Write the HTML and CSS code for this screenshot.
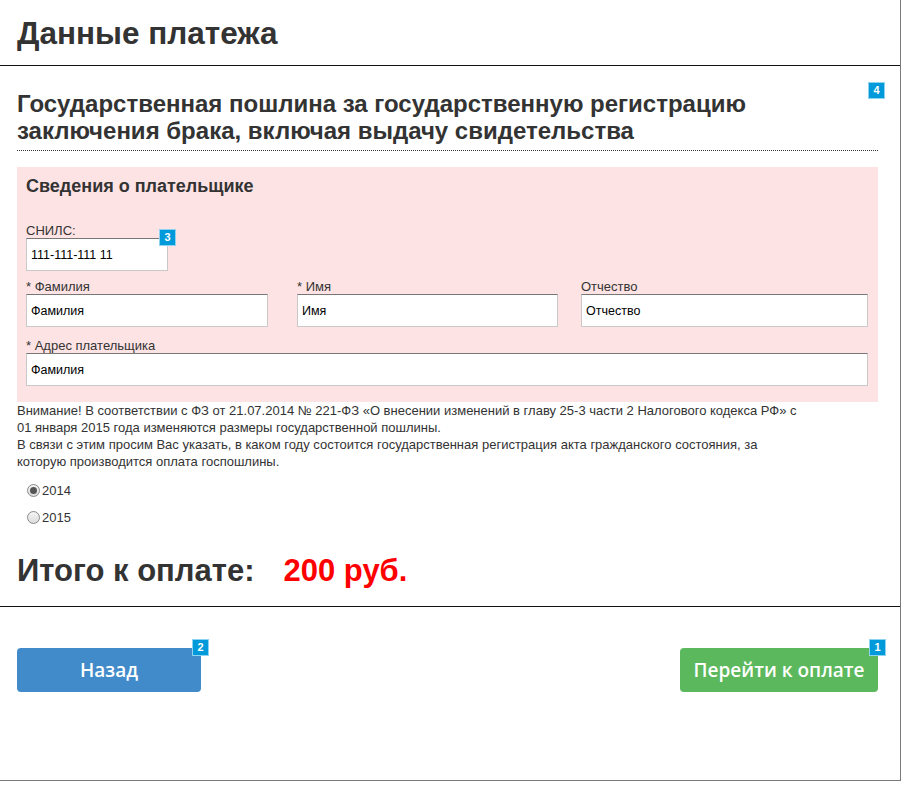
FILE: index.html
```html
<!DOCTYPE html>
<html lang="ru">
<head>
<meta charset="utf-8">
<title>Данные платежа</title>
<link rel="stylesheet" href="styles.css">
</head>
<body>
<div class="page">
  <header class="page-head">
    <h1 class="title">Данные платежа</h1>
  </header>
  <section class="content">
    <div class="service">
      <h2 class="service-title">Государственная пошлина за государственную регистрацию<br>заключения брака, включая выдачу свидетельства</h2>
      <span class="badge badge-service">4</span>
    </div>
    <div class="payer">
      <h3 class="payer-title">Сведения о плательщике</h3>
      <div class="field field-snils">
        <label class="label">СНИЛС:</label>
        <div class="input-wrap">
          <input class="input" type="text" value="111-111-111 11">
          <span class="badge badge-corner">3</span>
        </div>
      </div>
      <div class="name-row">
        <div class="field field-w1">
          <label class="label">* Фамилия</label>
          <input class="input" type="text" value="Фамилия">
        </div>
        <div class="field field-w2">
          <label class="label">* Имя</label>
          <input class="input" type="text" value="Имя">
        </div>
        <div class="field field-w3">
          <label class="label">Отчество</label>
          <input class="input" type="text" value="Отчество">
        </div>
      </div>
      <div class="field field-address">
        <label class="label">* Адрес плательщика</label>
        <input class="input" type="text" value="Фамилия">
      </div>
    </div>
    <p class="notice">Внимание! В соответствии с ФЗ от 21.07.2014 № 221-ФЗ «О внесении изменений в главу 25-3 части 2 Налогового кодекса РФ» с<br>01 января 2015 года изменяются размеры государственной пошлины.<br>В связи с этим просим Вас указать, в каком году состоится государственная регистрация акта гражданского состояния, за<br>которую производится оплата госпошлины.</p>
    <div class="years">
      <label class="year"><input class="radio" type="radio" name="year" checked>2014</label>
      <label class="year"><input class="radio" type="radio" name="year">2015</label>
    </div>
    <div class="total">
      <span class="total-label">Итого к оплате:</span>
      <span class="total-sum">200 руб.</span>
    </div>
  </section>
  <footer class="actions">
    <div class="btn-wrap">
      <button class="btn btn-back" type="button">Назад</button>
      <span class="badge badge-corner">2</span>
    </div>
    <div class="btn-wrap">
      <button class="btn btn-pay" type="button">Перейти к оплате</button>
      <span class="badge badge-corner">1</span>
    </div>
  </footer>
</div>
</body>
</html>
```

FILE: styles.css
```css
* { box-sizing: border-box; }

body {
  margin: 0;
  background: #fff;
  font-family: "Liberation Sans", Arial, sans-serif;
  color: #333;
}

.page {
  width: 901px;
  height: 781px;
  border-right: 1px solid #7a7a7a;
  border-bottom: 1px solid #7a7a7a;
  display: flex;
  flex-direction: column;
}

.page-head {
  height: 66px;
  border-bottom: 1px solid #111;
  padding: 0 17px;
}

.title {
  margin: 0;
  padding-top: 15px;
  font-size: 31.5px;
  line-height: 36px;
  font-weight: bold;
  color: #333;
}

.content {
  padding: 0 22px 0 17px;
  border-bottom: 1px solid #111;
}

.service {
  position: relative;
  padding-top: 24px;
  border-bottom: 1px dotted #333;
  padding-bottom: 6px;
}

.service-title {
  margin: 0;
  font-size: 24px;
  line-height: 27px;
  font-weight: bold;
  color: #333;
}

.badge {
  position: absolute;
  width: 17px;
  height: 17px;
  background: #0099d9;
  border: 1px solid #8fd3f2;
  color: #fff;
  font-family: "Liberation Sans", Arial, sans-serif;
  font-size: 11px;
  font-weight: bold;
  line-height: 15px;
  text-align: center;
}

.badge-service {
  top: 16px;
  right: -7px;
}

.badge-corner {
  top: -9px;
  right: -8px;
}

.payer {
  margin-top: 16px;
  background: #fde3e4;
  padding: 9px 10px 16px 9px;
}

.payer-title {
  margin: 0;
  font-size: 18px;
  line-height: 20px;
  font-weight: bold;
  color: #333;
}

.field {
  display: flex;
  flex-direction: column;
}

.field-snils {
  margin-top: 27px;
}

.input-wrap {
  position: relative;
  width: 142px;
}

.label {
  font-size: 13px;
  line-height: 15px;
  color: #333;
}

.input {
  display: block;
  width: 100%;
  height: 33px;
  margin: 0;
  padding: 0 4px;
  border: 1px solid #c9c9c9;
  border-top: 1px solid #777;
  background: #fff;
  font-family: "Liberation Sans", Arial, sans-serif;
  font-size: 12.5px;
  color: #000;
  outline: none;
}

.name-row {
  margin-top: 8px;
  display: grid;
  grid-template-columns: 271px 284px 287px;
}

.field-w1 { width: 242px; }
.field-w2 { width: 261px; }
.field-w3 { width: 287px; }

.field-address {
  margin-top: 11px;
}

.notice {
  margin: 0;
  font-size: 13px;
  line-height: 17px;
  color: #333;
  white-space: nowrap;
}

.years {
  margin-top: 7px;
  padding-left: 10px;
  display: flex;
  flex-direction: column;
}

.year {
  display: flex;
  align-items: center;
  height: 27px;
  font-size: 13px;
  color: #333;
}

.radio {
  appearance: none;
  -webkit-appearance: none;
  width: 13px;
  height: 13px;
  margin: 0 2px 0 0;
  border: 1px solid #8a8a8a;
  border-radius: 50%;
  background: linear-gradient(#f4f4f4, #dcdcdc);
  position: relative;
}

.radio:checked::after {
  content: "";
  position: absolute;
  left: 2px;
  top: 2px;
  width: 7px;
  height: 7px;
  border-radius: 50%;
  background: #555;
}

.total {
  margin-top: 21px;
  padding-bottom: 16px;
  display: flex;
  align-items: baseline;
  gap: 29px;
  font-size: 31px;
  line-height: 38px;
  font-weight: bold;
}

.total-label { color: #333; }
.total-sum { color: #ff0000; }

.actions {
  padding: 41px 22px 0 17px;
  display: flex;
  justify-content: space-between;
  align-items: flex-start;
}

.btn-wrap {
  position: relative;
}

.btn {
  display: block;
  height: 44px;
  border: none;
  border-radius: 4px;
  color: #fff;
  font-family: "Open Sans", "Liberation Sans", sans-serif;
  font-size: 19px;
  font-weight: 600;
  cursor: pointer;
}

.btn-back {
  width: 184px;
  background: #428bca;
}

.btn-pay {
  width: 198px;
  background: #5cb85c;
}
```
